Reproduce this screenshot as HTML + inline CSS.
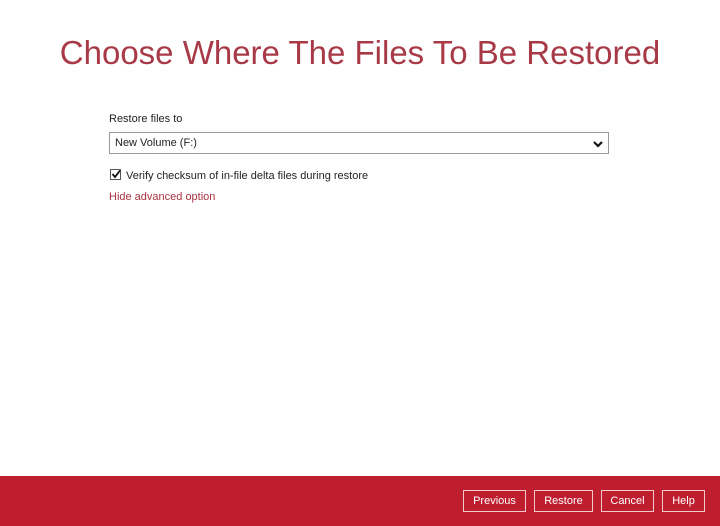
<html><head><style>
body{margin:0;width:720px;height:526px;background:#fff;font-family:"Liberation Sans",sans-serif;position:relative;overflow:hidden}
.t{position:absolute;left:0;width:720px;top:34px;text-align:center;font-size:33px;color:#a83a48;white-space:nowrap}
.l{position:absolute;left:109px;top:113px;font-size:11px;color:#222}
.sel{position:absolute;left:109px;top:132px;width:500px;height:22px;border:1px solid #999;box-sizing:border-box;font-size:11px;color:#222;line-height:21px;padding-left:5px}
.cb{position:absolute;left:110px;top:169px;width:11px;height:11px;border:1px solid #555;box-sizing:border-box}
.ct{position:absolute;left:126px;top:170px;font-size:11px;color:#222}
.h{position:absolute;left:109px;top:191px;font-size:11px;color:#a8323f}
.f{position:absolute;left:0;top:476px;width:720px;height:50px;background:#be1e2d}
.b{position:absolute;top:14px;height:22px;border:1px solid #f2c8cc;box-sizing:border-box;color:#fff;font-size:11px;text-align:center;line-height:21px}
</style></head><body>
<div class="t">Choose Where The Files To Be Restored</div>
<div class="l">Restore files to</div>
<div class="sel">New Volume (F:)<svg style="position:absolute;right:5px;top:7px" width="10" height="8" viewBox="0 0 10 8"><path d="M1 2 L5 6 L9 2" stroke="#111" stroke-width="2.2" fill="none"/></svg></div>
<div class="cb"><svg style="position:absolute;left:0;top:-1px" width="10" height="10" viewBox="0 0 10 10"><path d="M1.5 5 L4 8 L9 1.5" stroke="#111" stroke-width="1.8" fill="none"/></svg></div>
<div class="ct">Verify checksum of in-file delta files during restore</div>
<div class="h">Hide advanced option</div>
<div class="f">
<div class="b" style="left:463px;width:63px">Previous</div>
<div class="b" style="left:534px;width:59px">Restore</div>
<div class="b" style="left:601px;width:53px">Cancel</div>
<div class="b" style="left:662px;width:43px">Help</div>
</div>
</body></html>
